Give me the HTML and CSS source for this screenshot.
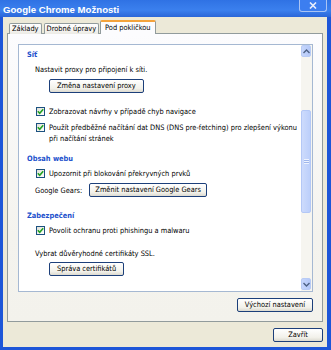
FILE: index.html
```html
<!DOCTYPE html>
<html>
<head>
    <meta charset="utf-8">
    <title>Google Chrome Možnosti</title>
    <link rel="stylesheet" href="styles.css">
</head>
<body>

    <div class="window">
        <div class="titlebar">
            <span class="title">Google Chrome Možnosti</span>
            <span class="closeBox">
                <svg width="8" height="7" viewBox="0 0 8 7"><path d="M1 0.5 L7 6.5 M7 0.5 L1 6.5" stroke="#e8eefc" stroke-width="1.6"/></svg>
            </span>
        </div>

        <div class="body">
            <div class="tabs">
                <div class="tab">Základy</div>
                <div class="tab">Drobné úpravy</div>
                <div class="tab active">Pod pokličkou</div>
            </div>

            <div class="panel">
                <div class="scrollBox">
                    <div class="content">

                        <div class="heading">Síť</div>
                        <div class="text proxyText">Nastavit proxy pro připojení k síti.</div>
                        <div class="buttonRow indent"><button class="btn">Změna nastavení proxy</button></div>

                        <div class="check first">
                            <span class="box"><svg width="7" height="7" viewBox="0 0 7 7"><path d="M0.8 3.2 L2.7 5.2 L6.2 1.2" fill="none" stroke="#21a121" stroke-width="1.6"/></svg></span>
                            <span>Zobrazovat návrhy v případě chyb navigace</span>
                        </div>
                        <div class="check second">
                            <span class="box"><svg width="7" height="7" viewBox="0 0 7 7"><path d="M0.8 3.2 L2.7 5.2 L6.2 1.2" fill="none" stroke="#21a121" stroke-width="1.6"/></svg></span>
                            <span>Použít předběžné načítání dat DNS (DNS pre-fetching) pro zlepšení výkonu<br>při načítání stránek</span>
                        </div>

                        <div class="heading spaced">Obsah webu</div>
                        <div class="check">
                            <span class="box"><svg width="7" height="7" viewBox="0 0 7 7"><path d="M0.8 3.2 L2.7 5.2 L6.2 1.2" fill="none" stroke="#21a121" stroke-width="1.6"/></svg></span>
                            <span>Upozornit při blokování překryvných prvků</span>
                        </div>
                        <div class="gearsRow">
                            <span class="text">Google Gears:</span>
                            <button class="btn gearsBtn">Změnit nastavení Google Gears</button>
                        </div>

                        <div class="heading security">Zabezpečení</div>
                        <div class="check">
                            <span class="box"><svg width="7" height="7" viewBox="0 0 7 7"><path d="M0.8 3.2 L2.7 5.2 L6.2 1.2" fill="none" stroke="#21a121" stroke-width="1.6"/></svg></span>
                            <span>Povolit ochranu proti phishingu a malwaru</span>
                        </div>
                        <div class="text sslText">Vybrat důvěryhodné certifikáty SSL.</div>
                        <div class="buttonRow indent certRow"><button class="btn">Správa certifikátů</button></div>

                    </div>

                    <div class="scrollbar">
                        <div class="sbButton">
                            <svg width="7" height="5" viewBox="0 0 7 5"><path d="M0.5 4 L3.5 1 L6.5 4" fill="none" stroke="#4d6185" stroke-width="1.4"/></svg>
                        </div>
                        <div class="sbTrack">
                            <div class="sbThumb"><span class="grip"></span></div>
                        </div>
                        <div class="sbButton">
                            <svg width="7" height="5" viewBox="0 0 7 5"><path d="M0.5 1 L3.5 4 L6.5 1" fill="none" stroke="#4d6185" stroke-width="1.4"/></svg>
                        </div>
                    </div>
                </div>

                <div class="panelFoot">
                    <button class="btn">Výchozí nastavení</button>
                </div>
            </div>

            <div class="dialogFoot">
                <button class="btn closeBtn">Zavřít</button>
            </div>
        </div>
    </div>

</body>
</html>
```

FILE: styles.css
```css
html, body {
    margin: 0;
    padding: 0;
}
body {
    width: 331px;
    height: 350px;
    overflow: hidden;
    font-family: "DejaVu Sans Condensed", "DejaVu Sans", sans-serif;
    font-stretch: condensed;
    font-size: 7.4px;
    color: #000;
}
.window {
    width: 331px;
    height: 350px;
    box-sizing: border-box;
    display: flex;
    flex-direction: column;
    background: #ece9d8;
    border-left: 3px solid #1d56d8;
    border-right: 4px solid #1d56d8;
    border-bottom: 3px solid #1d56d8;
}
.titlebar {
    height: 17px;
    margin: 0 -4px 0 -3px;
    padding: 0 4px 0 3px;
    display: flex;
    align-items: center;
    justify-content: space-between;
    background: linear-gradient(#2f72e4, #3b80ee 60%, #2a66d8);
}
.title {
    font-family: "Liberation Sans", sans-serif;
    font-stretch: normal;
    font-weight: bold;
    font-size: 9.6px;
    color: #fff;
    padding-top: 1px;
}
.closeBox {
    align-self: flex-start;
    width: 26px;
    height: 11px;
    border: 1px solid #aac4f4;
    border-top: none;
    border-radius: 0 0 3px 3px;
    background: #3c7ef0;
    display: flex;
    align-items: center;
    justify-content: center;
}
.body {
    flex: 1;
    display: flex;
    flex-direction: column;
    padding: 4px 4px 0 4px;
}
.tabs {
    display: flex;
    align-items: flex-end;
    padding-left: 2px;
    height: 13px;
    position: relative;
    z-index: 1;
    margin-bottom: -1px;
}
.tab {
    height: 10px;
    line-height: 10px;
    padding: 0 2px;
    margin-right: 2px;
    border: 1px solid #919b9c;
    border-bottom: none;
    border-radius: 2px 2px 0 0;
    background: linear-gradient(#ffffff, #ecebe5);
    white-space: nowrap;
}
.tab.active {
    height: 12px;
    line-height: 12px;
    margin-left: -1px;
    padding: 0 4px;
    border-top: 2px solid #f4a33c;
    background: #fcfcfe;
}
.panel {
    height: 287px;
    border: 1px solid #919b9c;
    background: linear-gradient(#fcfcfe, #f4f3ee 70%, #f3f2ec);
    display: flex;
    flex-direction: column;
}
.scrollBox {
    margin: 10px 9px 0 10px;
    height: 246px;
    border: 1px solid #a5b8d2;
    background: #fff;
    display: flex;
}
.content {
    flex: 1;
    min-width: 0;
    overflow: hidden;
    padding: 4px 0 0 8px;
    line-height: 11px;
}
.heading {
    color: #2150cc;
    font-weight: bold;
}
.heading.spaced {
    margin-top: 9px;
}
.heading.security {
    margin-top: 13px;
}
.text {
    padding-left: 8px;
}
.proxyText {
    margin-top: 4px;
}
.buttonRow {
    margin-top: 4px;
}
.indent {
    padding-left: 22px;
}
.btn {
    font-family: inherit;
    font-stretch: condensed;
    font-size: 7.4px;
    height: 14px;
    line-height: 12px;
    padding: 0 7px;
    border: 1px solid #1c3f7a;
    border-radius: 2px;
    background: linear-gradient(#ffffff, #f2f1ea 70%, #dcdad0);
    color: #000;
}
.gearsBtn {
    padding: 0 5px;
}
.check {
    display: flex;
    align-items: flex-start;
    margin-top: 4px;
    padding-left: 9px;
    white-space: nowrap;
}
.check.first {
    margin-top: 13px;
}
.check.second {
    margin-top: 5px;
}
.box {
    flex: none;
    width: 7px;
    height: 7px;
    margin: 1px 4px 0 0;
    border: 1px solid #1c5180;
    background: linear-gradient(135deg, #e0e0d8, #ffffff);
    display: flex;
}
.gearsRow {
    display: flex;
    align-items: center;
    gap: 7px;
    margin-top: 4px;
}
.sslText {
    margin-top: 12px;
}
.certRow {
    margin-top: 3px;
}
.scrollbar {
    width: 11px;
    flex: none;
    display: flex;
    flex-direction: column;
    background: #f6f5f0;
}
.sbButton {
    height: 10px;
    margin: 0 1px 1px 0;
    border: 1px solid #b8cbf5;
    border-radius: 2px;
    background: linear-gradient(90deg, #c6d6fc, #b4c8f8);
    display: flex;
    align-items: center;
    justify-content: center;
}
.sbTrack {
    flex: 1;
    padding-top: 52px;
}
.sbThumb {
    height: 101px;
    margin-right: 1px;
    border: 1px solid #b4c8f6;
    border-radius: 2px;
    background: linear-gradient(90deg, #cddbfc, #bccffb);
    display: flex;
    align-items: center;
    justify-content: center;
}
.grip {
    width: 5px;
    height: 5px;
    background: repeating-linear-gradient(#eef3fe 0 1px, #9fb6ec 1px 2px);
}
.panelFoot {
    display: flex;
    justify-content: flex-end;
    padding: 6px 9px 0 0;
}
.dialogFoot {
    display: flex;
    justify-content: flex-end;
    padding-top: 6px;
}
.closeBtn {
    width: 50px;
}
```
